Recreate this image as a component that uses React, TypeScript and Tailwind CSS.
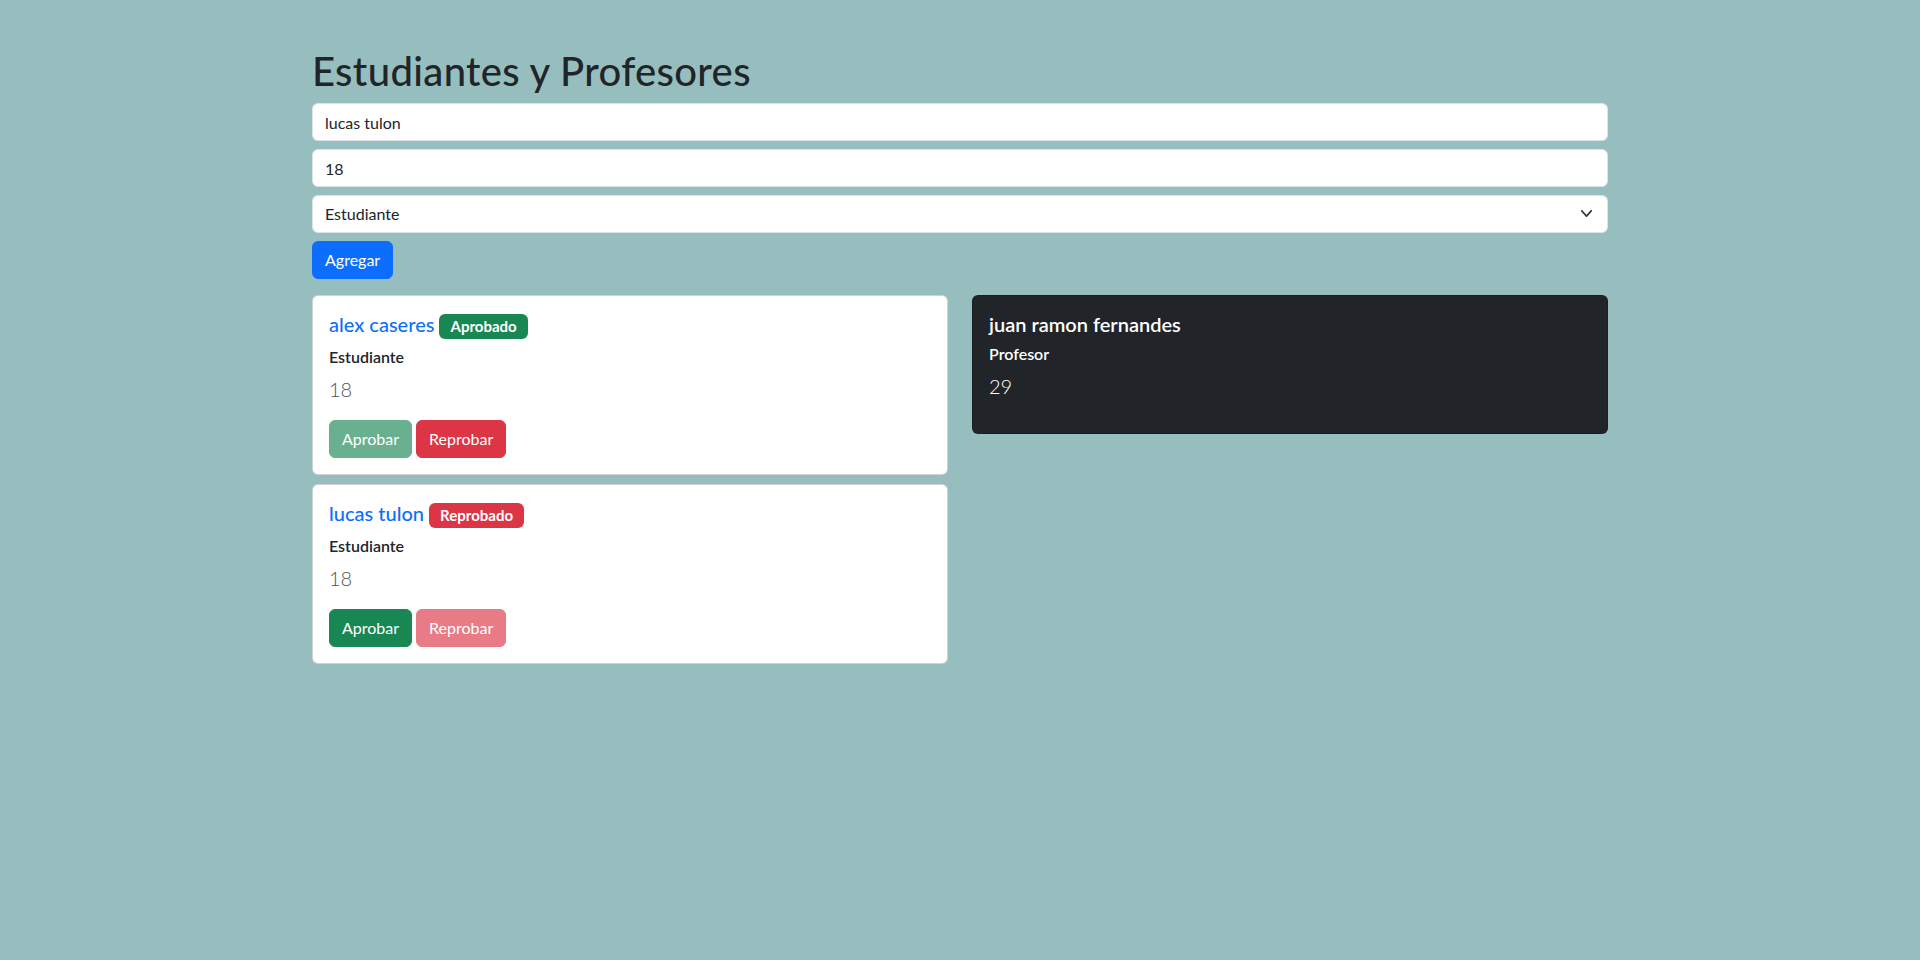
import React from "react";

function StudentCard({ name, approved }: { name: string; approved: boolean }) {
  return (
    <div className="bg-white border border-[rgba(0,0,0,0.175)] rounded-[6px]">
      <div className="p-4">
        <h5 className="text-[20px] leading-[1.2] font-medium mb-2 text-[#0d6efd]">
          {name}{" "}
          {approved ? (
            <span className="inline-block px-[11px] py-[5px] text-[15px] leading-none font-bold text-white bg-[#198754] rounded-[6px] align-baseline">
              Aprobado
            </span>
          ) : (
            <span className="inline-block px-[11px] py-[5px] text-[15px] leading-none font-bold text-white bg-[#dc3545] rounded-[6px] align-baseline">
              Reprobado
            </span>
          )}
        </h5>
        <h6 className="text-[16px] leading-[1.2] font-semibold mb-2 text-[#212529]">Estudiante</h6>
        <p className="text-[20px] font-light leading-[1.5] mb-4 text-[#505356]">18</p>
        <div className="flex gap-1">
          <button
            className={`px-3 py-[6px] text-[16px] leading-[1.5] text-white bg-[#198754] border border-[#198754] rounded-[6px] ${
              approved ? "opacity-65" : ""
            }`}
          >
            Aprobar
          </button>
          <button
            className={`px-3 py-[6px] text-[16px] leading-[1.5] text-white bg-[#dc3545] border border-[#dc3545] rounded-[6px] ${
              approved ? "" : "opacity-65"
            }`}
          >
            Reprobar
          </button>
        </div>
      </div>
    </div>
  );
}

export default function App() {
  return (
    <div className="min-h-[960px] bg-[#97bebe] font-['Lato','Open_Sans',sans-serif] text-[#212529] text-[16px] leading-[1.5]">
      <div className="w-[1296px] mx-auto pt-[47px]">
        <h1 className="text-[40px] leading-[1.2] font-medium tracking-[0.35px] mb-2">Estudiantes y Profesores</h1>
        <input
          className="block w-full h-[38px] px-3 py-[6px] mb-2 bg-white border border-[#dee2e6] rounded-[6px] text-[16px] text-[#212529] outline-none"
          defaultValue="lucas tulon"
        />
        <input
          className="block w-full h-[38px] px-3 py-[6px] mb-2 bg-white border border-[#dee2e6] rounded-[6px] text-[16px] text-[#212529] outline-none"
          defaultValue="18"
        />
        <div className="relative mb-2">
          <select className="block w-full h-[38px] pl-3 pr-9 py-[6px] bg-white border border-[#dee2e6] rounded-[6px] text-[16px] text-[#212529] appearance-none outline-none">
            <option>Estudiante</option>
            <option>Profesor</option>
          </select>
          <svg
            className="absolute right-4 top-[15px] pointer-events-none"
            width="11"
            height="7"
            viewBox="1 4 14 8"
            preserveAspectRatio="none"
          >
            <path fill="none" stroke="#343a40" strokeLinecap="round" strokeLinejoin="round" strokeWidth="2.2" d="m2 5 6 6 6-6" />
          </svg>
        </div>
        <button className="h-[38px] px-3 py-[6px] text-[16px] leading-[1.5] text-white bg-[#0d6efd] border border-[#0d6efd] rounded-[6px]">
          Agregar
        </button>
        <div className="grid grid-cols-2 gap-x-6 mt-4 items-start">
          <div className="flex flex-col gap-[9px]">
            <StudentCard name="alex caseres" approved={true} />
            <StudentCard name="lucas tulon" approved={false} />
          </div>
          <div className="bg-[#212529] border border-[rgba(0,0,0,0.175)] rounded-[6px] text-white">
            <div className="p-4">
              <h5 className="text-[20px] leading-[1.2] font-semibold mb-2">juan ramon fernandes</h5>
              <h6 className="text-[16px] leading-[1.2] font-semibold mb-2">Profesor</h6>
              <p className="text-[20px] font-light leading-[1.5] mb-4">29</p>
            </div>
          </div>
        </div>
      </div>
    </div>
  );
}
